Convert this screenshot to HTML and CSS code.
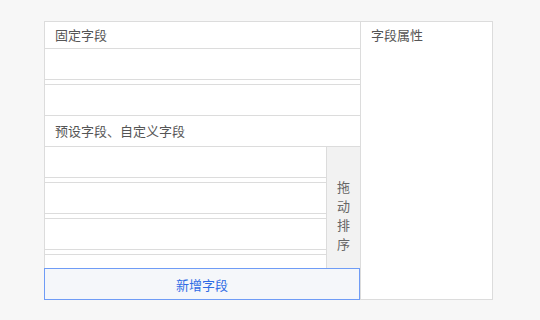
FILE: index.html
```html
<!DOCTYPE html>
<html lang="zh-CN">
<head>
    <meta charset="UTF-8">
    <meta name="viewport" content="width=device-width, initial-scale=1.0">
    <title>字段配置</title>
    <link rel="stylesheet" href="styles.css">
</head>
<body>
    <div class="editor">
        <div class="fields">
            <div class="group-title first">固定字段</div>
            <div class="field-list">
                <div class="field-item"></div>
                <div class="field-item"></div>
            </div>
            <div class="group-title">预设字段、自定义字段</div>
            <div class="drag-area">
                <div class="field-list scroll">
                    <div class="field-item"></div>
                    <div class="field-item"></div>
                    <div class="field-item"></div>
                    <div class="field-item"></div>
                </div>
                <div class="drag-handle"><span>拖动排序</span></div>
            </div>
            <button class="add-btn" type="button">新增字段</button>
        </div>
        <div class="props">
            <div class="props-title">字段属性</div>
        </div>
    </div>
</body>
</html>
```

FILE: styles.css
```css
body {
    margin: 0;
    padding: 21px 0 0 44px;
    background: #f7f7f7;
    font-family: "Noto Sans CJK SC", "Noto Sans", sans-serif;
    font-size: 13px;
    color: #555;
}
.editor {
    display: flex;
    width: 449px;
    height: 279px;
    box-sizing: border-box;
    border: 1px solid #dcdcdc;
    background: #fff;
}
.fields {
    display: flex;
    flex-direction: column;
    width: 315px;
    border-right: 1px solid #dcdcdc;
}
.group-title {
    height: 30px;
    line-height: 30px;
    padding: 0 10px;
    border-bottom: 1px solid #dcdcdc;
}
.group-title.first {
    height: 26px;
    line-height: 26px;
}
.field-item {
    height: 30px;
    border-bottom: 1px solid #dcdcdc;
    flex-shrink: 0;
}
.field-item + .field-item {
    margin-top: 4px;
    border-top: 1px solid #dcdcdc;
}
.drag-area {
    flex: 1;
    min-height: 0;
    display: flex;
}
.scroll {
    flex: 1;
    overflow: hidden;
}
.drag-handle {
    width: 34px;
    background: #f2f2f2;
    border-left: 1px solid #dcdcdc;
    padding-top: 30px;
    box-sizing: border-box;
}
.drag-handle span {
    display: block;
    width: 13px;
    margin: 0 auto;
    line-height: 19px;
    color: #666;
}
.add-btn {
    height: 32px;
    margin: 0 0 -1px -1px;
    width: calc(100% + 1px);
    flex-shrink: 0;
    border: 1px solid #6f9cf6;
    background: #f5f7fa;
    color: #2f6ce5;
    font-family: inherit;
    font-size: 13px;
    padding: 0;
    cursor: pointer;
}
.props {
    flex: 1;
}
.props-title {
    line-height: 26px;
    padding: 0 10px;
}
```
